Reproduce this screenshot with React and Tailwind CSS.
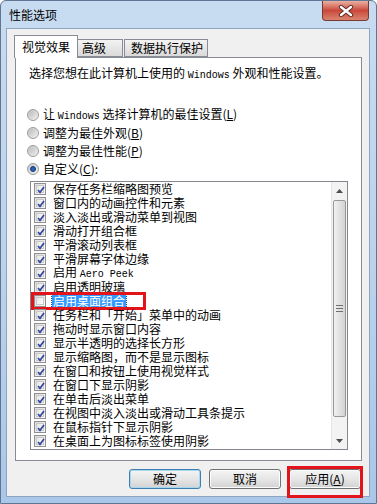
import React from 'react';

const items = [
  { label: '保存任务栏缩略图预览', on: true },
  { label: '窗口内的动画控件和元素', on: true },
  { label: '淡入淡出或滑动菜单到视图', on: true },
  { label: '滑动打开组合框', on: true },
  { label: '平滑滚动列表框', on: true },
  { label: '平滑屏幕字体边缘', on: true },
  { label: '启用 Aero Peek', on: true, mono: true },
  { label: '启用透明玻璃', on: true },
  { label: '启用桌面组合', on: false, selected: true },
  { label: '任务栏和「开始」菜单中的动画', on: true },
  { label: '拖动时显示窗口内容', on: true },
  { label: '显示半透明的选择长方形', on: true },
  { label: '显示缩略图，而不是显示图标', on: true },
  { label: '在窗口和按钮上使用视觉样式', on: true },
  { label: '在窗口下显示阴影', on: true },
  { label: '在单击后淡出菜单', on: true },
  { label: '在视图中淡入淡出或滑动工具条提示', on: true },
  { label: '在鼠标指针下显示阴影', on: true },
  { label: '在桌面上为图标标签使用阴影', on: true },
];

const Check = ({ on }) => (
  <span className="w-[12px] h-[12px] shrink-0 border border-[#8f8f8f] bg-linear-to-br from-[#dcdcdc] to-[#fbfbfb] p-[1px]">
    <span className="block w-full h-full border border-[#c8c8c8] bg-linear-to-br from-[#e6e6e6] to-white">
      {on && (
        <svg width="8" height="8" viewBox="0 0 8 8" className="block">
          <path d="M1 4 L3 6.3 L7 1" fill="none" stroke="#31479a" strokeWidth="1.7" />
        </svg>
      )}
    </span>
  </span>
);

const Radio = ({ on, children }) => (
  <div className="h-[18px] flex items-center">
    <span className="w-[12px] h-[12px] rounded-full border border-[#9a9a9a] bg-linear-to-br from-[#c9c9c9] to-[#f4f4f4] flex items-center justify-center">
      {on ? (
        <span className="w-[6px] h-[6px] rounded-full bg-[#2a62b6] border border-[#173a78]" />
      ) : (
        <span className="w-[8px] h-[8px] rounded-full bg-linear-to-br from-[#bdbdbd] to-[#ececec]" />
      )}
    </span>
    <span className="ml-[4px]">{children}</span>
  </div>
);

const Button = ({ children, focus }) => (
  <div
    className={`w-[72px] h-[20px] rounded-[3px] border flex items-center justify-center bg-linear-to-b from-[#f4f4f4] via-[#e6e6e6] to-[#d2d2d2] ${
      focus ? 'border-[#3c7fb1] shadow-[inset_0_0_0_1px_#a8d8f0]' : 'border-[#707070] shadow-[inset_0_0_0_1px_#fcfcfc]'
    }`}
  >
    {children}
  </div>
);

const App = () => {
  return (
    <div className="relative w-[377px] h-[504px] overflow-hidden bg-white font-['Noto_Sans_CJK_SC','Liberation_Sans',sans-serif] text-[12px] leading-[14px] text-black">
      <div className="w-full h-full flex flex-col rounded-t-[6px] border border-[#5f7591] bg-linear-to-b from-[#c8dcf1] via-[#bcd3ec] to-[#a9c7e8]">
        {/* title bar */}
        <div className="h-[27px] flex justify-between">
          <div className="pl-[8px] pt-[7px] text-[12px]">性能选项</div>
          <div className="mr-[7px] w-[47px] h-[20px] rounded-b-[4px] border border-t-0 border-[#7a3a34] bg-linear-to-b from-[#e8b0a4] via-[#c9473b] to-[#d98470] flex items-center justify-center">
            <svg width="16" height="12" viewBox="0 0 16 12">
              <path d="M3 2 L13 10 M13 2 L3 10" stroke="#5a2a26" strokeWidth="4.2" strokeLinecap="round" />
              <path d="M3 2 L13 10 M13 2 L3 10" stroke="#ffffff" strokeWidth="2.4" strokeLinecap="round" />
            </svg>
          </div>
        </div>

        {/* client area */}
        <div className="ml-[5px] mr-[6px] h-[469px] bg-[#f0f0f0] border border-[#8ea4c0]">
          <div className="h-[28px] flex items-end pl-[7px]">
            <div className="relative z-10 w-[64px] h-[23px] -mb-[1px] bg-white border border-b-0 border-[#898c95] flex items-center justify-center">
              视觉效果
            </div>
            <div className="w-[45px] h-[18px] border border-l-0 border-[#898c95] bg-linear-to-b from-[#f3f3f3] to-[#dadada] pl-[4px] flex items-center">
              高级
            </div>
            <div className="w-[84px] h-[18px] ml-[1px] border border-[#898c95] bg-linear-to-b from-[#f3f3f3] to-[#dadada] pl-[6px] flex items-center">
              数据执行保护
            </div>
          </div>

          <div className="ml-[8px] w-[347px] h-[404px] bg-white border border-[#898c95]">
            <div className="pt-[8px] pl-[13px]">
              选择您想在此计算机上使用的{' '}
              <span className="font-['Liberation_Mono',monospace] text-[10px]">Windows</span> 外观和性能设置。
            </div>

            <div className="mt-[23px] pl-[11px]">
              <Radio>
                让 <span className="font-['Liberation_Mono',monospace] text-[10px]">Windows</span> 选择计算机的最佳设置(<u>L</u>)
              </Radio>
              <Radio>调整为最佳外观(<u>B</u>)</Radio>
              <Radio>调整为最佳性能(<u>P</u>)</Radio>
              <Radio on>自定义(<u>C</u>):</Radio>
            </div>

            <div className="ml-[14px] mt-[3px] w-[318px] h-[269px] border border-[#828790] flex">
              <div className="flex-1 pl-[3px]">
                {items.map((it, i) => (
                  <div key={i} className="relative h-[14px] flex items-center">
                    <Check on={it.on} />
                    {it.selected ? (
                      <span className="ml-[6px] px-[1px] h-[14px] bg-[#3399ff] text-white outline outline-1 outline-dotted outline-[#1c4c86]">
                        {it.label}
                      </span>
                    ) : it.mono ? (
                      <span className="ml-[7px]">
                        启用 <span className="font-['Liberation_Mono',monospace] text-[10px]">Aero Peek</span>
                      </span>
                    ) : (
                      <span className="ml-[7px] whitespace-nowrap">{it.label}</span>
                    )}
                    {it.selected && (
                      <div className="absolute left-[-3px] top-[-2px] w-[115px] h-[18px] border-[3px] border-[#e3131b]" />
                    )}
                  </div>
                ))}
              </div>

              {/* scrollbar */}
              <div className="w-[16px] h-full bg-[#f3f3f3] border-l border-[#e6e6e6] flex flex-col">
                <div className="h-[18px] flex items-center justify-center">
                  <svg width="7" height="4" viewBox="0 0 7 4">
                    <path d="M0 4 L3.5 0 L7 4 Z" fill="#4d4d4d" />
                  </svg>
                </div>
                <div className="h-[217px] mx-[1px] rounded-[2px] border border-[#989898] bg-linear-to-r from-[#f1f1f1] via-[#e2e2e2] to-[#d3d3d3] flex items-center justify-center">
                  <div className="flex flex-col gap-[2px]">
                    <span className="w-[7px] h-[1px] bg-[#6f6f6f]" />
                    <span className="w-[7px] h-[1px] bg-[#6f6f6f]" />
                    <span className="w-[7px] h-[1px] bg-[#6f6f6f]" />
                  </div>
                </div>
                <div className="flex-1" />
                <div className="h-[17px] flex items-center justify-center">
                  <svg width="7" height="4" viewBox="0 0 7 4">
                    <path d="M0 0 L3.5 4 L7 0 Z" fill="#4d4d4d" />
                  </svg>
                </div>
              </div>
            </div>
          </div>

          <div className="mt-[8px] pr-[8px] flex justify-end gap-[8px]">
            <Button focus>确定</Button>
            <Button>取消</Button>
            <Button>应用(<u>A</u>)</Button>
          </div>
        </div>
      </div>

      {/* highlight around apply button */}
      <div className="absolute left-[287px] top-[466px] w-[76px] h-[32px] border-[3px] border-[#e3131b]" />
    </div>
  );
};

export default App;
